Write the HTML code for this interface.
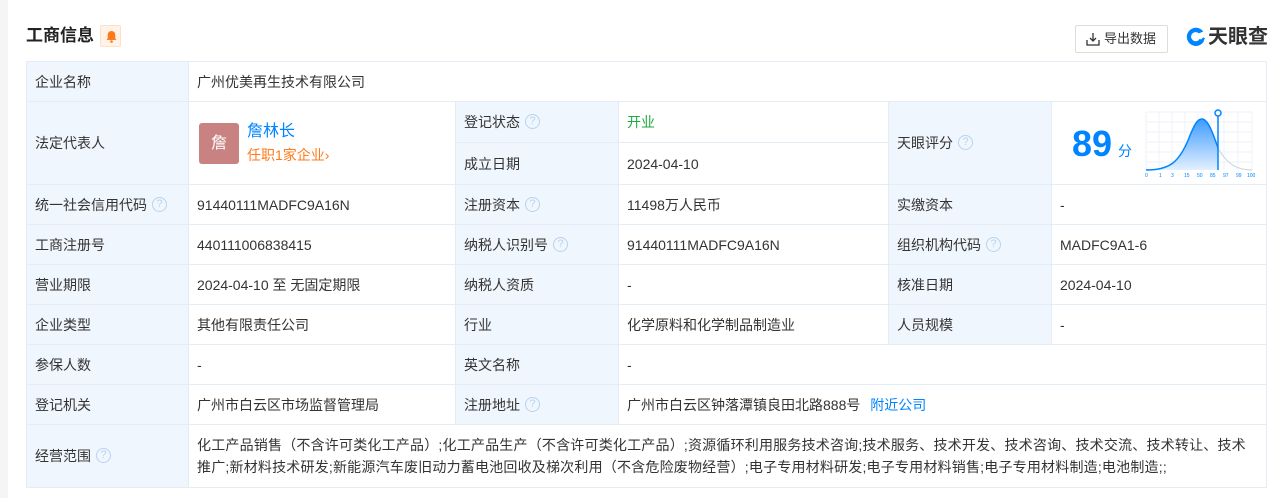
<!DOCTYPE html>
<html><head><meta charset="utf-8"><style>
*{margin:0;padding:0;box-sizing:border-box}
body{width:1280px;height:498px;background:#fff;font-family:"Liberation Sans","Noto Sans CJK SC",sans-serif;color:#333;font-size:14px;position:relative;overflow:hidden}
.strip{position:absolute;left:0;top:0;width:8px;height:498px;background:#f5f5f5}
h1{position:absolute;left:26px;top:25px;font-size:17px;font-weight:bold;color:#222;line-height:22px}
.bell{position:absolute;left:100px;top:25px;width:21px;height:22px;background:#fff2e6;border:1px solid #ffe0c7;border-radius:2px}
.btn{position:absolute;left:1075px;top:25px;width:93px;height:28px;border:1px solid #ddd;border-radius:2px;font-size:13px;line-height:26px;padding-left:28px;color:#333}
.logo{position:absolute;left:1186px;top:24px;font-size:20px;font-weight:bold;color:#333;line-height:26px;padding-left:22px}
table{position:absolute;left:26px;top:61px;border-collapse:collapse;table-layout:fixed;width:1240px}
td{border:1px solid #e4ecf5;padding:0 8px;height:40px;vertical-align:middle;line-height:20px}
td.l{background:#f0f6fd}
.q{display:inline-block;width:15px;height:15px;border:1px solid #b7d3ef;border-radius:50%;color:#b7d3ef;font-size:11px;line-height:13px;text-align:center;vertical-align:middle;margin-left:5px;margin-top:-3px}
a{color:#0084ff;text-decoration:none}
</style></head><body>
<div class="strip"></div>
<h1>工商信息</h1>
<div class="bell"><svg width="21" height="22" viewBox="0 0 21 22"><path d="M10.5 5c-2.5 0-3.8 2-3.8 4.2v3.4L5.5 14h10l-1.2-1.4V9.2C14.3 7 13 5 10.5 5z" fill="#ff7a1a"/><circle cx="10.5" cy="15.5" r="1.3" fill="#ff7a1a"/></svg></div>
<div class="btn"><svg style="position:absolute;left:10px;top:6px" width="14" height="14" viewBox="0 0 14 14" fill="none" stroke="#333" stroke-width="1.3"><path d="M7 1v8M4 6l3 3 3-3M1 8v5h12V8"/></svg>导出数据</div>
<div class="logo"><svg style="position:absolute;left:0;top:3px" width="20" height="20" viewBox="0 0 22 22"><path d="M19 5A10 10 0 1 0 20 15L15 13A5 5 0 1 1 14 7z" fill="#0084ff"/><path d="M8 18c4 0 9-2 12-6" stroke="#0084ff" stroke-width="2.5" fill="none"/></svg>天眼查</div>
<table>
<colgroup><col style="width:162px"><col style="width:267px"><col style="width:163px"><col style="width:270px"><col style="width:163px"><col style="width:215px"></colgroup>
<tr><td class="l">企业名称</td><td colspan="5">广州优美再生技术有限公司</td></tr>
<tr><td class="l" rowspan="2">法定代表人</td><td rowspan="2" style="position:relative">
<div style="position:absolute;left:10px;top:21px;width:40px;height:41px;background:#c98282;border-radius:3px;color:#fff;font-size:16px;text-align:center;line-height:41px">詹</div>
<div style="position:absolute;left:58px;top:19px;font-size:16px;color:#0084ff;line-height:22px">詹林长</div>
<div style="position:absolute;left:58px;top:43px;color:#ff7a1a;line-height:20px">任职1家企业›</div>
</td><td class="l" style="height:41px">登记状态<span class="q">?</span></td><td style="color:#1fa93f">开业</td><td class="l" rowspan="2">天眼评分<span class="q">?</span></td><td rowspan="2" style="position:relative">
<div style="position:absolute;left:20px;top:22px;font-size:36px;font-weight:bold;color:#0084ff;line-height:40px">89<span style="font-size:14px;font-weight:normal;margin-left:6px">分</span></div>
<svg style="position:absolute;left:92px;top:6px" width="112" height="70" viewBox="0 0 112 70">
<g stroke="#eef2f7" stroke-width="1"><path d="M2 4h106M2 14h106M2 24h106M2 34h106M2 44h106M2 54h106M2 4v58M15 4v58M28 4v58M41 4v58M54 4v58M67 4v58M80 4v58M94 4v58M108 4v58"/></g>
<defs><linearGradient id="g" x1="0" y1="0" x2="0" y2="1"><stop offset="0" stop-color="#3d9bff"/><stop offset="1" stop-color="#e3f0ff"/></linearGradient></defs>
<path d="M2 62C25 62 35 55 45 30C52 12 55 11 58 11C62 11 66 16 74 40V62z" fill="url(#g)"/>
<path d="M2 62C25 62 35 55 45 30C52 12 55 11 58 11C62 11 66 16 74 40" stroke="#0084ff" stroke-width="1.5" fill="none"/>
<path d="M74 40C84 58 95 62 108 62" stroke="#cfd8e3" stroke-width="1.2" fill="none"/>
<path d="M74 8v54" stroke="#0084ff" stroke-width="1.5"/><circle cx="74" cy="5" r="3" fill="#fff" stroke="#0084ff" stroke-width="1.5"/>
<text y="69" font-size="5" fill="#0084ff" font-family="Liberation Sans"><tspan x="1">0</tspan><tspan x="15">1</tspan><tspan x="27">3</tspan><tspan x="40">15</tspan><tspan x="53">50</tspan><tspan x="66">85</tspan><tspan x="79">97</tspan><tspan x="92">99</tspan><tspan x="103">100</tspan></text></svg>
</td></tr>
<tr><td class="l" style="height:42px">成立日期</td><td>2024-04-10</td></tr>
<tr><td class="l">统一社会信用代码<span class="q">?</span></td><td>91440111MADFC9A16N</td><td class="l">注册资本<span class="q">?</span></td><td>11498万人民币</td><td class="l">实缴资本</td><td>-</td></tr>
<tr><td class="l">工商注册号</td><td>440111006838415</td><td class="l">纳税人识别号<span class="q">?</span></td><td>91440111MADFC9A16N</td><td class="l">组织机构代码<span class="q">?</span></td><td>MADFC9A1-6</td></tr>
<tr><td class="l">营业期限</td><td>2024-04-10 至 无固定期限</td><td class="l">纳税人资质</td><td>-</td><td class="l">核准日期</td><td>2024-04-10</td></tr>
<tr><td class="l">企业类型</td><td>其他有限责任公司</td><td class="l">行业</td><td>化学原料和化学制品制造业</td><td class="l">人员规模</td><td>-</td></tr>
<tr><td class="l">参保人数</td><td>-</td><td class="l">英文名称</td><td colspan="3">-</td></tr>
<tr><td class="l">登记机关</td><td>广州市白云区市场监督管理局</td><td class="l">注册地址<span class="q">?</span></td><td colspan="3">广州市白云区钟落潭镇良田北路888号 <a style="margin-left:6px">附近公司</a></td></tr>
<tr><td class="l" style="height:63px">经营范围<span class="q">?</span></td><td colspan="5" style="line-height:22px;letter-spacing:0.2px;white-space:nowrap;overflow:hidden">化工产品销售（不含许可类化工产品）;化工产品生产（不含许可类化工产品）;资源循环利用服务技术咨询;技术服务、技术开发、技术咨询、技术交流、技术转让、技术<br>推广;新材料技术研发;新能源汽车废旧动力蓄电池回收及梯次利用（不含危险废物经营）;电子专用材料研发;电子专用材料销售;电子专用材料制造;电池制造;;</td></tr>
</table>
</body></html>
